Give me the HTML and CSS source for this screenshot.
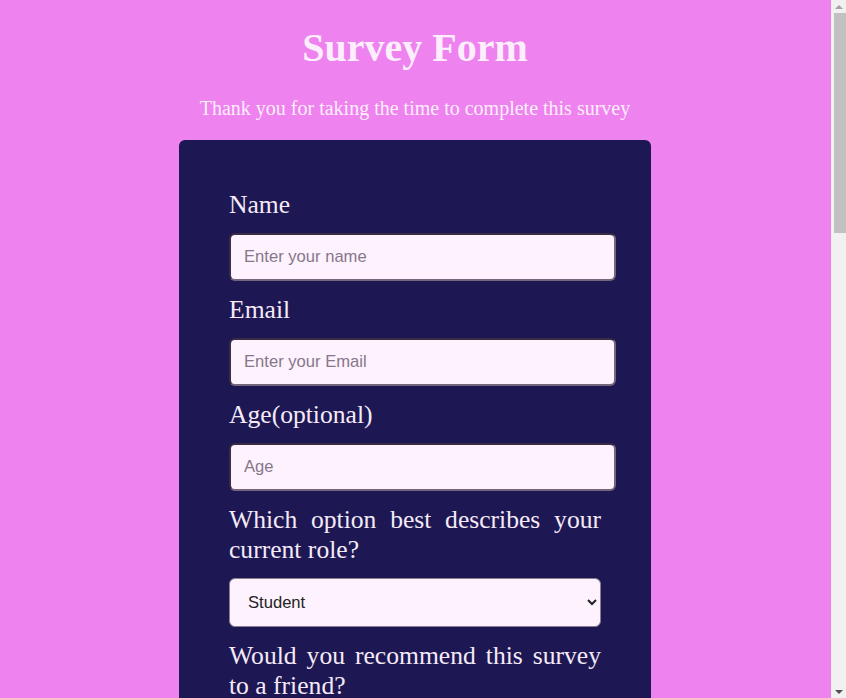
FILE: index.html
```html
<!DOCTYPE html>
<html lang="en">
<head>
    <meta charset="UTF-8">
    <meta name="viewport" content="width=device-width, initial-scale=1.0">
    <title>Survey Form</title>
    <link rel="stylesheet" href="styles.css">
</head>
<body>
    <h1 id="title">Survey Form</h1>
    <p id="description">Thank you for taking the time to complete this survey</p>

    <form id="survey-form">
        <div class="form-group">
            <label id="name-label" for="name">Name</label>
            <input type="text" id="name" class="form-control" placeholder="Enter your name" required>
        </div>

        <div class="form-group">
            <label id="email-label" for="email">Email</label>
            <input type="email" id="email" class="form-control" placeholder="Enter your Email" required>
        </div>

        <div class="form-group">
            <label id="number-label" for="number">Age(optional)</label>
            <input type="number" id="number" class="form-control" min="10" max="99" placeholder="Age">
        </div>

        <div class="form-group">
            <label for="dropdown">Which option best describes your current role?</label>
            <select id="dropdown" class="form-select">
                <option>Student</option>
                <option>Full Time Job</option>
                <option>Full Time Learner</option>
                <option>Prefer not to say</option>
                <option>Other</option>
            </select>
        </div>

        <div class="form-group">
            <p class="question">Would you recommend this survey to a friend?</p>
            <label class="choice"><input type="radio" name="recommend" value="definitely" checked> Definitely</label>
            <label class="choice"><input type="radio" name="recommend" value="maybe"> Maybe</label>
            <label class="choice"><input type="radio" name="recommend" value="not-sure"> Not sure</label>
        </div>

        <div class="form-group">
            <label for="feature">What is your favorite feature of this survey?</label>
            <select id="feature" class="form-select">
                <option>Select an option</option>
                <option>Challenges</option>
                <option>Projects</option>
                <option>Community</option>
                <option>Open Source</option>
            </select>
        </div>

        <div class="form-group">
            <p class="question">What would you like to see improved? (Check all that apply)</p>
            <label class="choice"><input type="checkbox" value="front-end"> Front-end Projects</label>
            <label class="choice"><input type="checkbox" value="back-end"> Back-end Projects</label>
            <label class="choice"><input type="checkbox" value="data"> Data Visualization</label>
            <label class="choice"><input type="checkbox" value="challenges"> Challenges</label>
            <label class="choice"><input type="checkbox" value="community"> Open Source Community</label>
            <label class="choice"><input type="checkbox" value="videos"> Videos</label>
            <label class="choice"><input type="checkbox" value="meetups"> City Meetups</label>
            <label class="choice"><input type="checkbox" value="wiki"> Wiki</label>
            <label class="choice"><input type="checkbox" value="forum"> Forum</label>
            <label class="choice"><input type="checkbox" value="courses"> Additional Courses</label>
        </div>

        <div class="form-group">
            <label for="comments">Any comments or suggestions?</label>
            <textarea id="comments" class="form-textarea" placeholder="Enter your comment here..."></textarea>
        </div>

        <div class="form-group">
            <button type="submit" id="submit" class="btn-submit">Submit</button>
        </div>
    </form>

    <!-- barra de desplazamiento dibujada -->
    <div class="scrollbar" aria-hidden="true">
        <span class="scroll-arrow up"></span>
        <span class="scroll-thumb"></span>
        <span class="scroll-arrow down"></span>
    </div>
</body>
</html>
```

FILE: styles.css
```css
:root {
    --color-bg: #ee82ee;
    --color-card: #1d1853;
    --color-text: #f6eaf8;
    --color-title: #fdeefd;
    --color-input: #fdf2fd;
}

body {
    margin: 0;
    padding: 0 16px 60px 0;
    background-color: var(--color-bg);
    font-family: 'Liberation Serif', 'Times New Roman', serif;
    color: var(--color-text);
}

h1 {
    margin: 0;
    padding-top: 24px;
    font-size: 40px;
    text-align: center;
    color: var(--color-title);
}

#description {
    margin: 26px 0 20px;
    font-size: 20px;
    text-align: center;
    color: var(--color-title);
}

#survey-form {
    width: 372px;
    margin: 0 auto;
    padding: 50px;
    background-color: var(--color-card);
    border-radius: 6px;
}

.form-group {
    margin-bottom: 14.5px;
}

.form-group > label,
.question {
    display: block;
    margin: 0 0 12.5px;
    font-size: 25.6px;
    text-align: justify;
}

.form-control {
    display: block;
    box-sizing: border-box;
    width: 104%;
    height: 48px;
    padding: 0 0 0 13px;
    background-color: var(--color-input);
    border: 2px solid #76667c;
    border-top-color: #3a2c42;
    border-left-color: #3a2c42;
    border-radius: 6px;
    font-family: 'Liberation Sans', Arial, sans-serif;
    font-size: 16.6px;
    color: #333;
}

.form-control::placeholder {
    color: #86778a;
}

.form-select {
    display: block;
    width: 100%;
    height: 49px;
    padding: 0 8px 0 14px;
    background-color: var(--color-input);
    border: 1px solid #8a7d8c;
    border-radius: 6px;
    font-family: 'Liberation Sans', Arial, sans-serif;
    font-size: 16.6px;
    color: #222;
}

.choice {
    display: block;
    margin-bottom: 10px;
    font-size: 20px;
}

.choice input {
    width: 18px;
    height: 18px;
    margin-right: 8px;
}

.form-textarea {
    display: block;
    width: 100%;
    height: 140px;
    padding: 10px 12px;
    box-sizing: border-box;
    background-color: var(--color-input);
    border: 1px solid #8a7d8c;
    border-radius: 6px;
    font-family: 'Liberation Sans', Arial, sans-serif;
    font-size: 16px;
    resize: vertical;
}

.btn-submit {
    display: block;
    width: 100%;
    margin-top: 20px;
    padding: 14px;
    background-color: var(--color-bg);
    color: #fff;
    border: none;
    border-radius: 6px;
    font-family: 'Liberation Serif', 'Times New Roman', serif;
    font-size: 22px;
    cursor: pointer;
}

/* Barra de desplazamiento */
.scrollbar {
    position: fixed;
    top: 0;
    right: 0;
    bottom: 0;
    width: 15px;
    background-color: #f1f1f1;
    display: flex;
    flex-direction: column;
    align-items: center;
}

.scroll-arrow {
    width: 0;
    height: 0;
    border-left: 4px solid transparent;
    border-right: 4px solid transparent;
}

.scroll-arrow.up {
    margin-top: 5px;
    border-bottom: 4px solid #a3a3a3;
}

.scroll-arrow.down {
    margin: auto 0 4px;
    border-top: 4px solid #505050;
}

.scroll-thumb {
    width: 12px;
    height: 220px;
    margin: 4px 0 0 3px;
    background-color: #c1c1c1;
}
```
